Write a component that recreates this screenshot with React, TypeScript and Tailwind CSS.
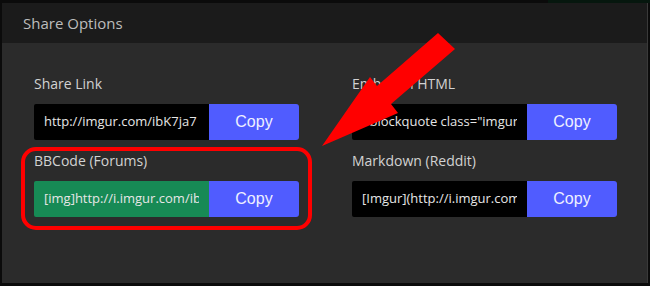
import React from "react";

const fields = [
  { label: "Share Link", value: "http://imgur.com/ibK7ja7", bg: "bg-black" },
  {
    label: "Embed in HTML",
    value: '<blockquote class="imgur-embed-pub" lang="en" data-id="ibK7ja7">',
    bg: "bg-black",
  },
  { label: "BBCode (Forums)", value: "[img]http://i.imgur.com/ibK7ja7.jpg[/img]", bg: "bg-[#178a55]" },
  { label: "Markdown (Reddit)", value: "[Imgur](http://i.imgur.com/ibK7ja7.jpg)", bg: "bg-black" },
];

function ShareField({ label, value, bg }: { label: string; value: string; bg: string }) {
  return (
    <div className="flex flex-col">
      <p className="h-5 text-[14px] leading-5 text-[#d2d2d2]">{label}</p>
      <div className="mt-[10px] flex h-9">
        <div className={`flex w-[175px] items-center rounded-l-[2px] px-[10px] ${bg}`}>
          <div className="w-full min-w-0 overflow-hidden whitespace-nowrap text-[13px] text-[#e6e6e6]">
            {value}
          </div>
        </div>
        <button
          type="button"
          className="w-[90px] rounded-r-[3px] bg-[#505cff] font-['Liberation_Sans',Arial,sans-serif] text-[16px] text-[#eef0ff]"
        >
          Copy
        </button>
      </div>
    </div>
  );
}

export default function App() {
  return (
    <div className="relative h-[286px] w-[650px] overflow-hidden bg-[#0b0b0b] font-['Open_Sans',sans-serif]">
      <div className="absolute right-0 top-0 h-[3px] w-[102px] bg-[#06170e]" />

      <div className="absolute left-[2px] top-[3px] flex h-[280px] w-[646px] flex-col border-r border-[#3a3a3a]">
        <div className="flex h-10 shrink-0 items-center bg-[#1b1b1b] px-[21px]">
          <h2 className="text-[15px] text-[#bdbdbd]">Share Options</h2>
        </div>
        <div className="grid flex-1 grid-cols-[265px_265px] content-start gap-x-[53px] gap-y-[11px] bg-[#2b2b2b] pl-[32px] pt-[31px]">
          {fields.map((f) => (
            <ShareField key={f.label} {...f} />
          ))}
        </div>
      </div>

      {/* annotation overlay */}
      <svg className="pointer-events-none absolute inset-0" width="650" height="286" viewBox="0 0 650 286">
        <rect x="23" y="149" width="287" height="79" rx="13" fill="none" stroke="#ff0000" strokeWidth="4" />
        <polygon
          points="322,146 370,77 377,86 438,33 455,49 391,104 398,113"
          fill="#ff0000"
        />
      </svg>
    </div>
  );
}
